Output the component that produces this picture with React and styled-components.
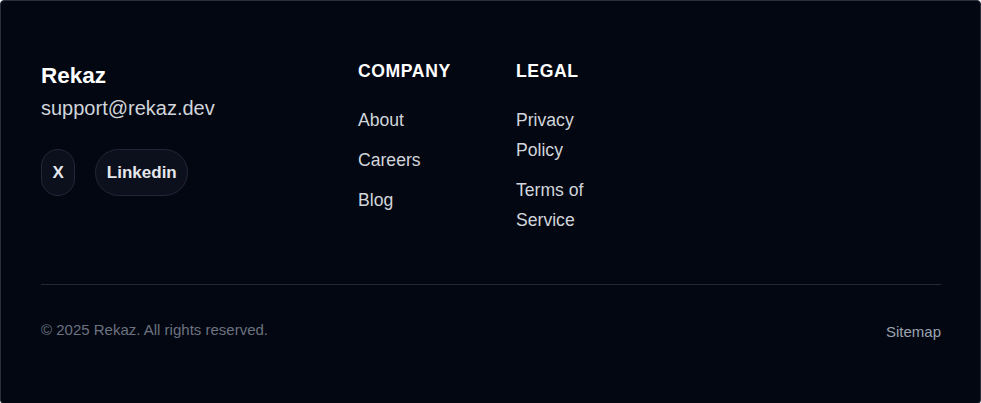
import React from 'react';
import styled, { createGlobalStyle } from 'styled-components';

const GlobalStyle = createGlobalStyle`
  * {
    box-sizing: border-box;
  }

  body {
    margin: 0;
    background: #ffffff;
    font-family: "Liberation Sans", Arial, sans-serif;
  }
`;

const Footer = styled.footer`
  min-height: 100vh;
  background-color: #030712;
  border: 1px solid #2a303b;
  border-radius: 4px;
  padding: 58px 39px 60px 40px;
  color: #d1d5db;
`;

const Columns = styled.div`
  display: grid;
  grid-template-columns: 269px 110px 100px 1fr;
  column-gap: 48px;
  align-items: start;
`;

const Brand = styled.div`
  display: flex;
  flex-direction: column;
`;

const BrandName = styled.div`
  color: #ffffff;
  font-size: 22.5px;
  font-weight: 700;
  line-height: 34px;
`;

const Email = styled.div`
  color: #d1d5db;
  font-size: 20px;
  line-height: 30px;
`;

const Socials = styled.div`
  display: flex;
  gap: 20px;
  margin-top: 26px;
`;

const SocialButton = styled.a`
  display: inline-flex;
  align-items: center;
  justify-content: center;
  height: 47px;
  padding: 0 10.5px;
  border: 1px solid #1f2937;
  border-radius: 999px;
  background-color: #0b101c;
  color: #e5e7eb;
  font-size: 17px;
  font-weight: 700;
  text-decoration: none;
`;

const Column = styled.div`
  display: flex;
  flex-direction: column;
`;

const Heading = styled.h3`
  margin: 0 0 22px;
  color: #ffffff;
  font-size: 17.6px;
  font-weight: 700;
  letter-spacing: 0.6px;
  line-height: 24px;
  text-transform: uppercase;
`;

const LinkList = styled.ul`
  display: flex;
  flex-direction: column;
  gap: 10px;
  margin: 0;
  padding: 0;
  list-style: none;
`;

const LinkItem = styled.li`
  font-size: 17.6px;
  line-height: 30px;
`;

const NavLink = styled.a`
  color: #d1d5db;
  text-decoration: none;
`;

const Divider = styled.hr`
  margin: 49px 0 0;
  border: none;
  border-top: 1px solid #1f2937;
`;

const Bottom = styled.div`
  display: flex;
  justify-content: space-between;
  align-items: flex-start;
  padding-top: 34px;
  font-size: 15px;
  line-height: 22px;
`;

const Copyright = styled.span`
  color: #6b7280;
`;

const Sitemap = styled.a`
  margin-top: 2px;
  color: #9ca3af;
  text-decoration: none;
`;

const company = ['About', 'Careers', 'Blog'];
const legal = ['Privacy Policy', 'Terms of Service'];

export default function App() {
  return (
    <>
      <GlobalStyle />
      <Footer>
        <Columns>
          <Brand>
            <BrandName>Rekaz</BrandName>
            <Email>support@rekaz.dev</Email>
            <Socials>
              <SocialButton href="#">X</SocialButton>
              <SocialButton href="#">Linkedin</SocialButton>
            </Socials>
          </Brand>

          <Column>
            <Heading>Company</Heading>
            <LinkList>
              {company.map((item) => (
                <LinkItem key={item}><NavLink href="#">{item}</NavLink></LinkItem>
              ))}
            </LinkList>
          </Column>

          <Column>
            <Heading>Legal</Heading>
            <LinkList>
              {legal.map((item) => (
                <LinkItem key={item}><NavLink href="#">{item}</NavLink></LinkItem>
              ))}
            </LinkList>
          </Column>
        </Columns>

        <Divider />

        <Bottom>
          <Copyright>© 2025 Rekaz. All rights reserved.</Copyright>
          <Sitemap href="#">Sitemap</Sitemap>
        </Bottom>
      </Footer>
    </>
  );
}
